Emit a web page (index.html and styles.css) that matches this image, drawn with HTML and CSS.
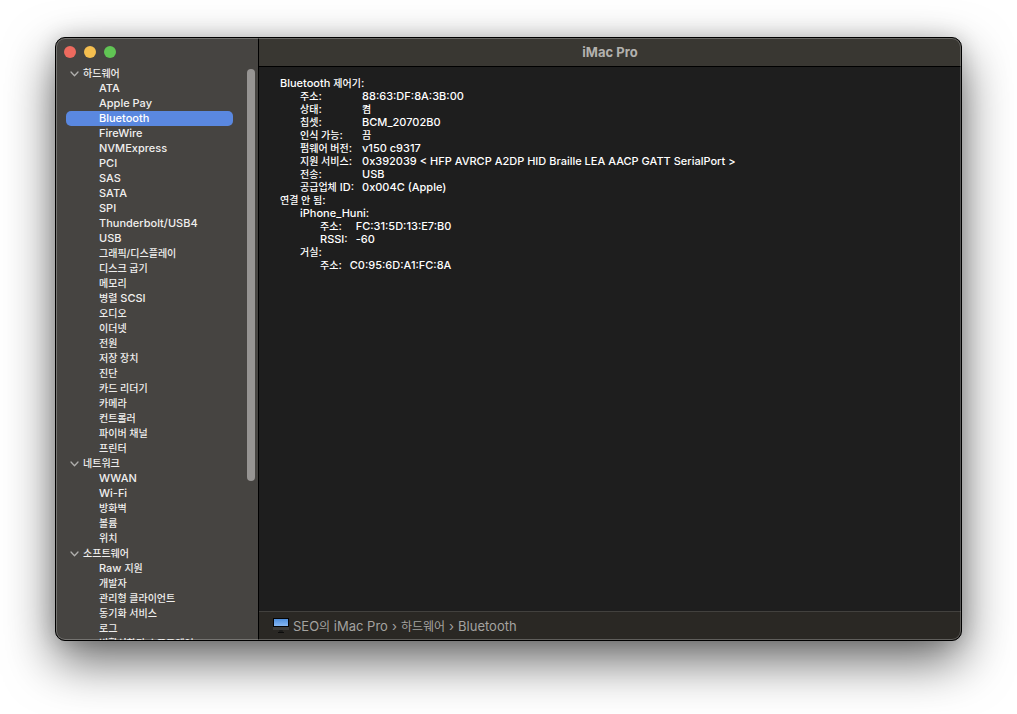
FILE: index.html
```
<!DOCTYPE html>
<html lang="ko">
<head>
<meta charset="utf-8">
<title>iMac Pro</title>
<link rel="stylesheet" href="styles.css">
</head>
<body>
<div class="window">
  <aside class="sidebar">
    <div class="controls">
      <button class="light close" aria-label="닫기"></button>
      <button class="light minimize" aria-label="최소화"></button>
      <button class="light maximize" aria-label="확대"></button>
    </div>
    <nav class="tree" aria-label="카테고리">
      <button class="group ko"><svg class="chevron" viewBox="0 0 9 6"><path d="M1 1l3.500 3.700L8 1"/></svg>하드웨어</button>
      <button class="item">ATA</button>
      <button class="item">Apple Pay</button>
      <button class="item selected">Bluetooth</button>
      <button class="item">FireWire</button>
      <button class="item">NVMExpress</button>
      <button class="item">PCI</button>
      <button class="item">SAS</button>
      <button class="item">SATA</button>
      <button class="item">SPI</button>
      <button class="item">Thunderbolt/USB4</button>
      <button class="item">USB</button>
      <button class="item ko">그래픽/디스플레이</button>
      <button class="item ko">디스크 굽기</button>
      <button class="item ko">메모리</button>
      <button class="item"><span class="ko">병렬</span> SCSI</button>
      <button class="item ko">오디오</button>
      <button class="item ko">이더넷</button>
      <button class="item ko">전원</button>
      <button class="item ko">저장 장치</button>
      <button class="item ko">진단</button>
      <button class="item ko">카드 리더기</button>
      <button class="item ko">카메라</button>
      <button class="item ko">컨트롤러</button>
      <button class="item ko">파이버 채널</button>
      <button class="item ko">프린터</button>
      <button class="group ko"><svg class="chevron" viewBox="0 0 9 6"><path d="M1 1l3.500 3.700L8 1"/></svg>네트워크</button>
      <button class="item">WWAN</button>
      <button class="item">Wi-Fi</button>
      <button class="item ko">방화벽</button>
      <button class="item ko">볼륨</button>
      <button class="item ko">위치</button>
      <button class="group ko"><svg class="chevron" viewBox="0 0 9 6"><path d="M1 1l3.500 3.700L8 1"/></svg>소프트웨어</button>
      <button class="item">Raw <span class="ko">지원</span></button>
      <button class="item ko">개발자</button>
      <button class="item ko">관리형 클라이언트</button>
      <button class="item ko">동기화 서비스</button>
      <button class="item ko">로그</button>
      <button class="item ko">비활성화된 소프트웨어</button>
    </nav>
    <div class="scrollbar"></div>
  </aside>
  <section class="main">
    <header class="titlebar"><h1>iMac Pro</h1></header>
    <main class="report">
      <h2>Bluetooth <span class="ko">제어기</span>:</h2>
      <dl class="fields indent">
        <dt><span class="ko">주소</span>:</dt><dd>88:63:DF:8A:3B:00</dd>
        <dt><span class="ko">상태</span>:</dt><dd><span class="ko">켬</span></dd>
        <dt><span class="ko">칩셋</span>:</dt><dd>BCM_20702B0</dd>
        <dt><span class="ko">인식 가능</span>:</dt><dd><span class="ko">끔</span></dd>
        <dt><span class="ko">펌웨어 버전</span>:</dt><dd>v150 c9317</dd>
        <dt><span class="ko">지원 서비스</span>:</dt><dd>0x392039 &lt; HFP AVRCP A2DP HID Braille LEA AACP GATT SerialPort &gt;</dd>
        <dt><span class="ko">전송</span>:</dt><dd>USB</dd>
        <dt><span class="ko">공급업체</span> ID:</dt><dd>0x004C (Apple)</dd>
      </dl>
      <h2><span class="ko">연결 안 됨</span>:</h2>
      <div class="indent">
        <h3>iPhone_Huni:</h3>
        <dl class="fields indent">
          <dt><span class="ko">주소</span>:</dt><dd>FC:31:5D:13:E7:B0</dd>
          <dt>RSSI:</dt><dd>-60</dd>
        </dl>
        <h3><span class="ko">거실</span>:</h3>
        <dl class="fields indent">
          <dt><span class="ko">주소</span>:</dt><dd>C0:95:6D:A1:FC:8A</dd>
        </dl>
      </div>
    </main>
    <footer class="pathbar">
      <svg class="computer" viewBox="0 0 16 16">
        <defs><linearGradient id="screen" x1="0" y1="0" x2="0" y2="1"><stop offset="0" stop-color="#4f8fdc"/><stop offset="1" stop-color="#86b8f4"/></linearGradient></defs>
        <path d="M0 0h16v9H0z" fill="#050505"/>
        <path d="M1 1h14v7H1z" fill="url(#screen)"/>
        <path d="M0 9h16v3H0z" fill="#3c3c3a"/>
        <path d="M6.500 12h3l.5 2H6z" fill="#1c1c1b"/>
        <path d="M5 14h6v1H5z" fill="#0c0c0c"/>
      </svg>
      <span>SEO<span class="path-ko">의</span> iMac Pro</span>
      <span class="separator">›</span>
      <span class="path-ko">하드웨어</span>
      <span class="separator">›</span>
      <span>Bluetooth</span>
    </footer>
  </section>
</div>
</body>
</html>
```
FILE: styles.css
```
* {
  box-sizing: border-box;
}

body {
  margin: 0;
  height: 100vh;
  padding: 37px 55px 73px;
  display: flex;
  overflow: hidden;
  background: #fff;
  color: #fff;
  font: 500 11px/13px Inter, "Noto Sans CJK KR", sans-serif;
}

h1, h2, h3, dl, dd {
  margin: 0;
  font: inherit;
}

button {
  padding: 0;
  border: 0;
  background: none;
  color: inherit;
  font: inherit;
  text-align: left;
}

.window {
  position: relative;
  flex: 1;
  min-width: 0;
  display: flex;
  border: 1px solid #000;
  border-radius: 10px;
  overflow: hidden;
  background: #1e1e1e;
  box-shadow: 0 20px 50px rgba(0, 0, 0, .6), 0 0 20px rgba(0, 0, 0, .15);
}

.window::after {
  content: "";
  position: absolute;
  inset: 0;
  border: 1px solid rgba(255, 255, 255, .25);
  border-radius: 9px;
  pointer-events: none;
}

.sidebar {
  position: relative;
  flex: none;
  width: 203px;
  padding: 8px 10px 0;
  border-right: 1px solid #000;
  overflow: hidden;
  background: #464441;
}

.controls {
  display: flex;
  gap: 8px;
  padding: 0 0 8px;
  margin-left: -2px;
}

.light {
  width: 12px;
  height: 12px;
  border-radius: 50%;
}

.close {
  background: #ed6a5e;
}

.minimize {
  background: #f5bf4f;
}

.maximize {
  background: #61c554;
}

.tree {
  display: flex;
  flex-direction: column;
  width: 167px;
  color: #f0efee;
}

.group,
.item {
  flex: none;
  height: 15px;
  line-height: 15px;
  white-space: nowrap;
}

.group {
  display: flex;
  align-items: center;
  gap: 4px;
  padding-left: 4px;
}

.item {
  padding-left: 33px;
  border-radius: 5px;
}

.selected {
  background: #5a88e0;
  color: #fff;
}

.chevron {
  width: 9px;
  height: 6px;
  fill: none;
  stroke: #b0afad;
  stroke-width: 1.3;
  stroke-linecap: round;
  stroke-linejoin: round;
}

.ko {
  font-size: 10px;
}

.scrollbar {
  position: absolute;
  top: 31px;
  right: 3px;
  width: 8px;
  height: 412px;
  border-radius: 4px;
  background: #969492;
}

.main {
  flex: 1;
  min-width: 0;
  display: flex;
  flex-direction: column;
}

.titlebar {
  height: 29px;
  border-bottom: 1px solid #000;
  background: #393732;
  color: #b3b1ae;
  text-align: center;
}

.titlebar h1 {
  font-size: 13px;
  font-weight: 700;
  line-height: 28px;
}

.report {
  flex: 1;
  min-height: 0;
  padding: 10px 21px;
  overflow: hidden;
}

.indent {
  margin-left: 20px;
}

.fields {
  display: grid;
  grid-template-columns: max-content 1fr;
  column-gap: 8px;
  grid-auto-rows: 13px;
}

.report h2,
.report h3 {
  height: 13px;
}

.pathbar {
  display: flex;
  align-items: center;
  gap: 4px;
  height: 29px;
  padding-left: 14px;
  border-top: 1px solid #42413e;
  background: #2a2824;
  color: #a4a3a0;
  font-size: 13px;
  font-weight: 400;
}

.path-ko {
  font-size: 12px;
}

.computer {
  width: 16px;
  height: 16px;
}
```
